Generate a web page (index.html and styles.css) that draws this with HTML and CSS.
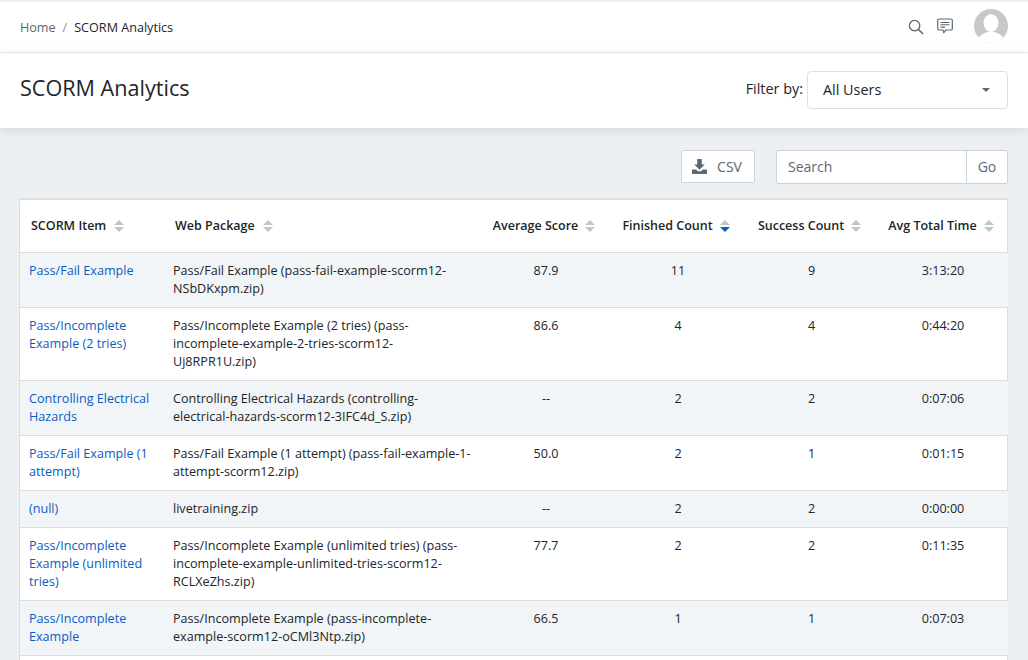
FILE: index.html
```html
<!DOCTYPE html>
<html lang="en">
<head>
<meta charset="utf-8">
<title>SCORM Analytics</title>
<link rel="stylesheet" href="styles.css">
</head>
<body>
<header class="topbar">
  <nav class="crumbs"><a class="crumb-link">Home</a><span class="crumb-sep">/</span><span class="crumb-current">SCORM Analytics</span></nav>
  <div class="top-actions">
    <svg class="icon-search" width="16" height="16" viewBox="0 0 16 16"><circle cx="6.6" cy="6.6" r="5.2" fill="none" stroke="#5c6873" stroke-width="1.3"/><path d="M10.4 10.4l4.6 4.6" stroke="#5c6873" stroke-width="1.5" fill="none"/></svg>
    <svg class="icon-chat" width="16" height="16" viewBox="0 0 16 16"><path d="M2 1h12a1.3 1.3 0 0 1 1.3 1.3v8.4A1.3 1.3 0 0 1 14 12H9l-2.2 2.6L6 12H2A1.3 1.3 0 0 1 .7 10.700V2.300A1.300 1.300 0 0 1 2 1z" fill="none" stroke="#5c6873" stroke-width="1.200"/><path d="M3.500 4.500h9M3.500 6.800h9M3.500 9.100h4.500" stroke="#5c6873" stroke-width="1.100" fill="none"/></svg>
    <svg class="avatar" width="34" height="34" viewBox="0 0 34 34"><defs><clipPath id="av"><circle cx="17" cy="17" r="17"/></clipPath></defs><circle cx="17" cy="17" r="17" fill="#c8c8c8"/><g clip-path="url(#av)"><ellipse cx="17" cy="14" rx="7.500" ry="9" fill="#fff"/><path d="M3 34c0-7 6-9 10-11h8c4 2 10 4 10 11z" fill="#fff"/></g></svg>
  </div>
</header>
<section class="page-head">
  <h1 class="page-title">SCORM Analytics</h1>
  <div class="filter">
    <span class="filter-label">Filter by:</span>
    <div class="select"><span>All Users</span><span class="caret"></span></div>
  </div>
</section>
<main class="content">
  <div class="toolbar">
    <button class="csv-btn">
      <svg width="15" height="15" viewBox="0 0 15 15"><path d="M5.200 0h4.600v5.500h3L7.500 10.800 2.200 5.500h3z" fill="#5c6873"/><path d="M0 10.500h4.200l1.800 1.800h3l1.800-1.800H15V15H0z" fill="#5c6873"/></svg>
      <span>CSV</span>
    </button>
    <div class="search">
      <span class="search-input">Search</span>
      <span class="search-go">Go</span>
    </div>
  </div>
  <div class="card">
    <table class="grid">
      <colgroup><col class="c1"><col class="c2"><col class="c3"><col class="c4"><col class="c5"><col class="c6"></colgroup>
      <thead>
        <tr>
          <th class="left">SCORM Item<svg class="sort" width="10" height="12" viewBox="0 0 10 12"><path d="M5 0l5 5H0z" fill="#c2c6ca"/><path d="M5 12l5-5H0z" fill="#c2c6ca"/></svg></th>
          <th class="left">Web Package<svg class="sort" width="10" height="12" viewBox="0 0 10 12"><path d="M5 0l5 5H0z" fill="#c2c6ca"/><path d="M5 12l5-5H0z" fill="#c2c6ca"/></svg></th>
          <th>Average Score<svg class="sort" width="10" height="12" viewBox="0 0 10 12"><path d="M5 0l5 5H0z" fill="#c2c6ca"/><path d="M5 12l5-5H0z" fill="#c2c6ca"/></svg></th>
          <th>Finished Count<svg class="sort" width="10" height="12" viewBox="0 0 10 12"><path d="M5 0l5 5H0z" fill="#c2c6ca"/><path d="M5 12l5-5H0z" fill="#0b5cc1"/></svg></th>
          <th>Success Count<svg class="sort" width="10" height="12" viewBox="0 0 10 12"><path d="M5 0l5 5H0z" fill="#c2c6ca"/><path d="M5 12l5-5H0z" fill="#c2c6ca"/></svg></th>
          <th>Avg Total Time<svg class="sort" width="10" height="12" viewBox="0 0 10 12"><path d="M5 0l5 5H0z" fill="#c2c6ca"/><path d="M5 12l5-5H0z" fill="#c2c6ca"/></svg></th>
        </tr>
      </thead>
      <tbody>
        <tr><td class="left"><a>Pass/Fail Example</a></td><td class="left">Pass/Fail Example (pass-fail-example-scorm12-NSbDKxpm.zip)</td><td>87.9</td><td>11</td><td>9</td><td>3:13:20</td></tr>
        <tr><td class="left"><a>Pass/Incomplete Example (2 tries)</a></td><td class="left">Pass/Incomplete Example (2 tries) (pass-incomplete-example-2-tries-scorm12-Uj8RPR1U.zip)</td><td>86.6</td><td>4</td><td>4</td><td>0:44:20</td></tr>
        <tr><td class="left"><a>Controlling Electrical Hazards</a></td><td class="left">Controlling Electrical Hazards (controlling-electrical-hazards-scorm12-3IFC4d_S.zip)</td><td>--</td><td>2</td><td>2</td><td>0:07:06</td></tr>
        <tr><td class="left"><a>Pass/Fail Example (1 attempt)</a></td><td class="left">Pass/Fail Example (1 attempt) (pass-fail-example-1-attempt-scorm12.zip)</td><td>50.0</td><td>2</td><td>1</td><td>0:01:15</td></tr>
        <tr><td class="left"><a>(null)</a></td><td class="left">livetraining.zip</td><td>--</td><td>2</td><td>2</td><td>0:00:00</td></tr>
        <tr><td class="left"><a>Pass/Incomplete Example (unlimited tries)</a></td><td class="left">Pass/Incomplete Example (unlimited tries) (pass-incomplete-example-unlimited-tries-scorm12-RCLXeZhs.zip)</td><td>77.7</td><td>2</td><td>2</td><td>0:11:35</td></tr>
        <tr><td class="left"><a>Pass/Incomplete Example</a></td><td class="left">Pass/Incomplete Example (pass-incomplete-example-scorm12-oCMl3Ntp.zip)</td><td>66.5</td><td>1</td><td>1</td><td>0:07:03</td></tr>
        <tr><td class="left">&nbsp;</td><td class="left"></td><td></td><td></td><td></td><td></td></tr>
      </tbody>
    </table>
  </div>
</main>
</body>
</html>
```
FILE: styles.css
```css
* { box-sizing: border-box; }
html, body { margin: 0; height: 660px; overflow: hidden; }
body { background: #ecf0f3; color: #212529; font-family: "Open Sans", sans-serif; font-size: 12.600px; line-height: 18px; }
.topbar { margin-top: 2px; height: 51px; background: #fff; border-bottom: 1px solid #e8ebee; display: flex; align-items: center; justify-content: space-between; padding: 0 20px; }
.crumbs { display: flex; align-items: center; font-size: 12.600px; padding-top: 1px; }
.crumb-link { color: #5c6873; }
.crumb-sep { color: #8a939b; margin: 0 7px; }
.top-actions { display: flex; align-items: center; }
.icon-search { margin-right: 13px; }
.icon-chat { margin-right: 21px; margin-bottom: 3px; }
.avatar { display: block; margin-bottom: 2px; }
.page-head { height: 75px; background: #fff; display: flex; align-items: center; justify-content: space-between; padding: 0 20px; box-shadow: 0 2px 10px rgba(60, 75, 90, .14); position: relative; }
.page-title { margin: -5px 0 0; font-size: 21.600px; line-height: 30px; font-weight: 400; }
.filter { display: flex; align-items: center; font-size: 14.400px; margin-top: -1px; }
.filter-label { margin-right: 4px; margin-top: -2px; }
.select { width: 201px; height: 38px; padding: 0 17px 0 15px; background: #fff; border: 1px solid #dde1e5; border-radius: 4px; display: flex; align-items: center; justify-content: space-between; }
.caret { width: 0; height: 0; border: 4px solid transparent; border-top-color: #5c6873; border-bottom: 0; }
.content { padding: 22px 20px 0 19px; }
.toolbar { display: flex; justify-content: flex-end; align-items: flex-start; height: 49px; }
.csv-btn { width: 74px; height: 33px; padding: 0 2px 0 0; margin-right: 21px; background: #fff; border: 1px solid #ccd2d7; border-radius: 2px; color: #5c6873; font: 14px/18px "Open Sans", sans-serif; display: flex; align-items: center; justify-content: center; gap: 10px; }
.search { display: flex; width: 232px; height: 34px; font-size: 14px; color: #5c6873; background: #fff; border: 1px solid #ccd2d7; border-radius: 2px; }
.search-input { flex: 1; padding: 7px 11px; }
.search-go { width: 41px; text-align: center; padding-top: 7px; border-left: 1px solid #ccd2d7; }
.card { background: #fff; border: 1px solid #d9dee2; border-radius: 2px; box-shadow: 0 -1px 0 #dfe3e7; }
.grid { width: 988px; border-collapse: collapse; table-layout: fixed; }
.c1 { width: 144px; }
.c2 { width: 317px; }
.c3 { width: 130px; }
.c4 { width: 134px; }
.c5 { width: 133px; }
.c6 { width: 130px; }
th { height: 52px; padding: 0 4px 0 0; font-size: 12.500px; font-weight: 600; text-align: center; border-bottom: 1px solid #d9dee2; white-space: nowrap; }
th.left { text-align: left; padding-left: 11px; }
th.left .sort { margin-left: 8px; }
td { padding: 9px; text-align: center; vertical-align: top; border-bottom: 1px solid #d9dee2; }
td.left { text-align: left; }
td:nth-child(2) { padding-right: 10px; }
tbody tr:nth-child(odd) { background: #f1f5f8; }
a { color: #0b5cc1; }
.sort { margin-left: 7px; vertical-align: -2px; }
```
